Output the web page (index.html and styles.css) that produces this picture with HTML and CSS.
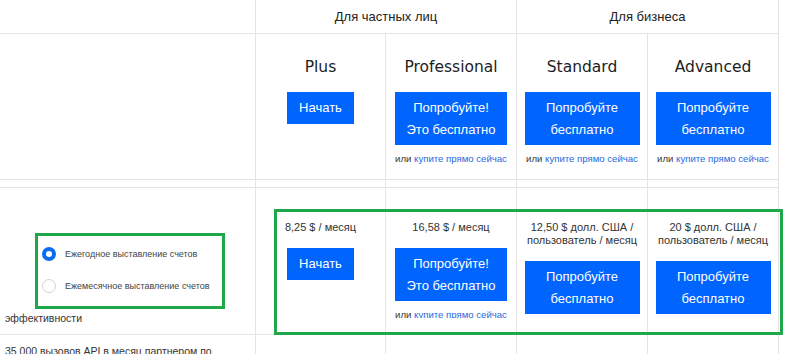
FILE: index.html
```html
<!DOCTYPE html>
<html lang="ru">
<head>
    <meta charset="UTF-8">
    <meta name="viewport" content="width=device-width, initial-scale=1.0">
    <title>Тарифы</title>
    <link rel="stylesheet" href="styles.css">
</head>
<body>
    <div class="pricing">
        <div class="grid head">
            <div class="cell"></div>
            <div class="cell group span2">Для частных лиц</div>
            <div class="cell group span2">Для бизнеса</div>

            <div class="cell"></div>
            <div class="cell plan">
                <div class="plan-name">Plus</div>
                <a class="button" href="#">Начать</a>
            </div>
            <div class="cell plan">
                <div class="plan-name">Professional</div>
                <a class="button" href="#">Попробуйте!<br>Это бесплатно</a>
                <div class="buy">или <a href="#">купите прямо сейчас</a></div>
            </div>
            <div class="cell plan">
                <div class="plan-name">Standard</div>
                <a class="button" href="#">Попробуйте бесплатно</a>
                <div class="buy">или <a href="#">купите прямо сейчас</a></div>
            </div>
            <div class="cell plan">
                <div class="plan-name">Advanced</div>
                <a class="button" href="#">Попробуйте бесплатно</a>
                <div class="buy">или <a href="#">купите прямо сейчас</a></div>
            </div>

            <div class="cell strip"></div>
            <div class="cell strip"></div>
            <div class="cell strip"></div>
            <div class="cell strip"></div>
            <div class="cell strip"></div>
        </div>

        <!-- body rows -->
        <div class="grid body-rows">
            <div class="cell feature feature-bottom">
                эффективности
                <div class="billing">
                    <div class="billing-box">
                        <label class="radio-row">
                            <span class="radio checked"></span>
                            Ежегодное выставление счетов
                        </label>
                        <label class="radio-row">
                            <span class="radio"></span>
                            Ежемесячное выставление счетов
                        </label>
                    </div>
                </div>
            </div>
            <div class="cell price">
                <div class="price-inner">
                    <div class="amount">8,25 $ / месяц</div>
                    <a class="button" href="#">Начать</a>
                </div>
            </div>
            <div class="cell price">
                <div class="price-inner">
                    <div class="amount">16,58 $ / месяц</div>
                    <a class="button" href="#">Попробуйте!<br>Это бесплатно</a>
                    <div class="buy">или <a href="#">купите прямо сейчас</a></div>
                </div>
            </div>
            <div class="cell price">
                <div class="price-inner">
                    <div class="amount">12,50 $ долл. США /<br>пользователь / месяц</div>
                    <a class="button" href="#">Попробуйте бесплатно</a>
                </div>
            </div>
            <div class="cell price">
                <div class="price-inner">
                    <div class="amount">20 $ долл. США /<br>пользователь / месяц</div>
                    <a class="button" href="#">Попробуйте бесплатно</a>
                </div>
            </div>

            <div class="cell feature">35 000 вызовов API в месяц партнером по</div>
            <div class="cell"></div>
            <div class="cell"></div>
            <div class="cell"></div>
            <div class="cell"></div>
        </div>

        <div class="highlight"></div>
    </div>
</body>
</html>
```

FILE: styles.css
```css
body {
    margin: 0;
    font-family: "Liberation Sans", Arial, sans-serif;
    color: #222;
    background: #fff;
    overflow: hidden;
}

.pricing {
    position: relative;
    width: 779px;
}

.grid {
    display: grid;
    grid-template-columns: 256px 130px 131px 131px 131px;
}

.cell {
    border-right: 1px solid #e4e4e4;
    border-bottom: 1px solid #e4e4e4;
    box-sizing: border-box;
}

.span2 {
    grid-column: span 2;
}

.group {
    height: 34px;
    display: flex;
    align-items: center;
    justify-content: center;
    font-size: 13px;
}

.plan {
    height: 146px;
    padding-top: 23px;
    text-align: center;
}

.plan-name {
    font-family: "DejaVu Sans", sans-serif;
    font-size: 15.5px;
    line-height: 20px;
    color: #1d1d1d;
    margin-bottom: 15px;
}

.strip {
    height: 8px;
}

.button {
    display: inline-block;
    box-sizing: border-box;
    max-width: 115px;
    padding: 5px 12px;
    background: #0064fe;
    color: #fff;
    font-size: 13px;
    line-height: 21.5px;
    text-decoration: none;
    vertical-align: top;
}

.buy {
    margin-top: 7px;
    font-size: 9.6px;
    line-height: 13px;
    color: #333;
}

.buy a {
    color: #2668e0;
    text-decoration: none;
}

.feature {
    padding: 9px 5px 6px;
    font-size: 10.5px;
    line-height: 14px;
    color: #333;
}

.feature-bottom {
    position: relative;
    height: 147px;
    display: flex;
    align-items: flex-end;
    padding-bottom: 9px;
}

.price {
    height: 147px;
}

.price-inner {
    height: 130px;
    overflow: hidden;
    padding-top: 33px;
    box-sizing: border-box;
    text-align: center;
}

.amount {
    font-size: 11px;
    line-height: 13px;
    color: #333;
    margin-bottom: 14px;
}

/* billing period switch sits over the feature label */
.billing {
    position: absolute;
    left: 35px;
    top: 45px;
    background: #fff;
    padding-bottom: 4px;
}

.billing-box {
    width: 190px;
    height: 76px;
    box-sizing: border-box;
    border: 3px solid #1fa84a;
    padding: 2px 0 4px 4px;
}

.radio-row {
    display: flex;
    align-items: center;
    height: 32px;
    font-size: 9px;
    color: #444;
}

.radio {
    width: 14px;
    height: 14px;
    box-sizing: border-box;
    border: 1px solid #d4d4d4;
    border-radius: 50%;
    margin-right: 9px;
}

.radio.checked {
    border: 4px solid #0a6cf0;
}

.highlight {
    position: absolute;
    left: 274px;
    top: 209px;
    width: 509px;
    height: 126px;
    box-sizing: border-box;
    border: 3px solid #1fa84a;
}
```
